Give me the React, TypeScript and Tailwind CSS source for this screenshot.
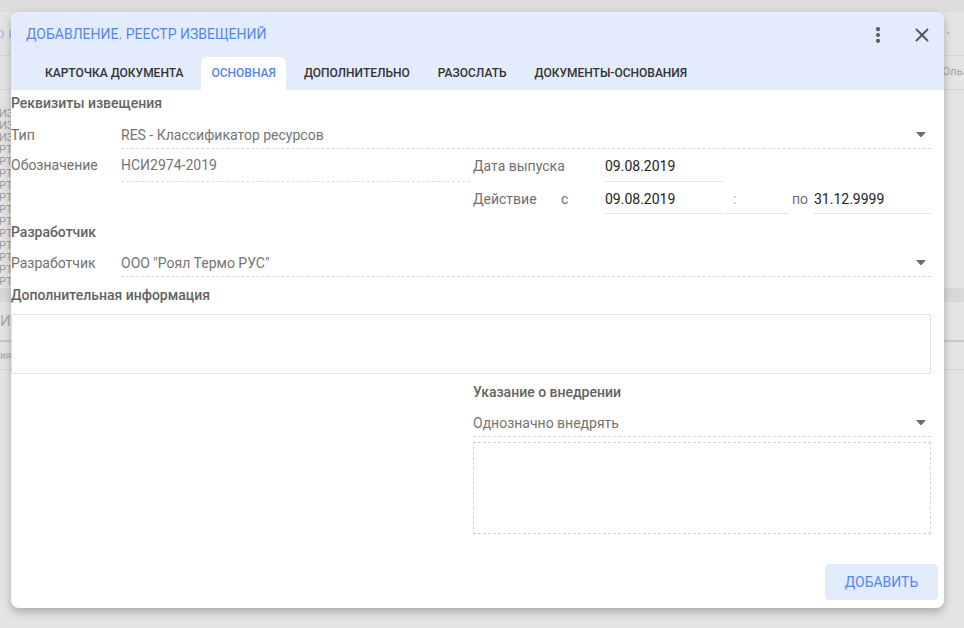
import { EllipsisVertical, X } from "lucide-react";

const tabs = ["КАРТОЧКА ДОКУМЕНТА", "ОСНОВНАЯ", "ДОПОЛНИТЕЛЬНО", "РАЗОСЛАТЬ", "ДОКУМЕНТЫ-ОСНОВАНИЯ"];

const bgRows = ["ИЗ", "ИЗ", "ИЗ", "РТ", "РТ", "РТ", "РТ", "РТ", "РТ", "РТ", "РТ", "РТ", "РТ", "РТ", "РТ"];

function Caret() {
  return (
    <svg width="10" height="6" viewBox="0 0 10 6" className="shrink-0 mr-[5px]">
      <path d="M0 0 L10 0 L5 5.5 Z" fill="#6b6b6b" />
    </svg>
  );
}

function SelectRow({ label, value }: { label: string; value: string }) {
  return (
    <div className="flex items-end h-8">
      <div className="w-[110px] shrink-0 pb-[4px] leading-5 text-[#707070]">{label}</div>
      <div className="flex-1 h-8 flex items-end justify-between pb-[3px] border-b border-dashed border-[#cddff8]">
        <span className="leading-5 text-[#747474]">{value}</span>
        <div className="pb-[7px]">
          <Caret />
        </div>
      </div>
    </div>
  );
}

function DateField({ value, width }: { value: string; width: string }) {
  return (
    <div className={`${width} h-full flex items-end pb-1 border-b border-[#dbe4f2]`}>
      <span className="leading-5 text-[#222]">{value}</span>
    </div>
  );
}

export default function App() {
  return (
    <div
      className="relative w-[964px] h-[628px] overflow-hidden bg-[#e4e4e4] text-[14px]"
      style={{ fontFamily: "Roboto, 'Noto Sans', sans-serif" }}
    >
      {/* faint page behind the dialog */}
      <div className="h-[12px] bg-[#dddddd]" />
      <div className="h-[44px] border-b border-[#d6d6d6] flex items-center justify-between">
        <span className="text-[#b6b0d6] text-[15px] -ml-[4px]">о и</span>
        <span className="text-[#e7a0a0] text-[10px] mr-[14px]">•</span>
      </div>
      <div className="h-[34px] border-b border-[#d6d6d6] flex justify-end items-center">
        <span className="text-[#a0a0a0] text-[11px] -mr-[4px]">Ольз</span>
      </div>
      <div className="flex flex-col pt-[18px] text-[11px] leading-[12px] text-[#9c9c9c]">
        {bgRows.map((r, i) => (
          <span key={i} className="-ml-px">{r}</span>
        ))}
      </div>
      <div className="h-[14px] bg-[#d9d9d9]" />
      <div className="h-[40px] border-b-2 border-[#c8c8c8] flex items-center text-[#aaa] text-[15px]">И</div>
      <div className="h-[28px] border-b border-[#d6d6d6] flex items-center text-[#aaa] text-[10px]">ия</div>

      {/* dialog */}
      <div className="absolute left-[11px] top-[12px] w-[933px] bg-white rounded-[8px] overflow-hidden shadow-[0_4px_10px_rgba(0,0,0,0.25)]">
        <div className="bg-[#e2ecfd]">
          <div className="h-[45px] flex items-center justify-between pl-[15px] pr-[11px]">
            <span className="text-[#5586ec] text-[14px]">ДОБАВЛЕНИЕ. РЕЕСТР ИЗВЕЩЕНИЙ</span>
            <div className="flex items-center gap-[23px] text-[#555]">
              <EllipsisVertical size={20} strokeWidth={3} />
              <X size={22} strokeWidth={2} />
            </div>
          </div>
          <div className="h-[33px] flex items-stretch gap-[8px] pl-[24px]">
            {tabs.map((t) => (
              <div
                key={t}
                className={`px-[10px] flex items-center pb-[1px] rounded-t-[6px] text-[12px] font-medium ${
                  t === "ОСНОВНАЯ" ? "bg-white text-[#5586ec]" : "text-[#333]"
                }`}
              >
                {t}
              </div>
            ))}
          </div>
        </div>

        <div className="pr-[13px]">
          <div className="h-[27px] flex items-center font-medium text-[#636363]">Реквизиты извещения</div>
          <SelectRow label="Тип" value="RES - Классификатор ресурсов" />

          <div className="flex">
            <div className="w-[459px] flex items-start h-[33px]">
              <div className="w-[110px] shrink-0 leading-5 text-[#707070] pt-[6px]">Обозначение</div>
              <div className="flex-1 h-[33px] pt-[6px] border-b border-dashed border-[#cddff8]">
                <span className="leading-5 text-[#747474]">НСИ2974-2019</span>
              </div>
            </div>
            <div className="flex-1 ml-[3px] flex flex-col">
              <div className="h-[33px] flex items-end">
                <div className="w-[132px] shrink-0 pb-[6px] leading-5 text-[#707070]">Дата выпуска</div>
                <div className="w-[118px] h-full flex items-end pb-[5px] border-b border-[#dbe4f2]">
                  <span className="leading-5 text-[#222]">09.08.2019</span>
                </div>
              </div>
              <div className="h-8 flex items-end">
                <div className="w-[88px] shrink-0 pb-[5px] leading-5 text-[#707070]">Действие</div>
                <div className="w-[44px] shrink-0 pb-[5px] leading-5 text-[#707070]">с</div>
                <DateField value="09.08.2019" width="w-[118px]" />
                <div className="ml-[3px] w-[63px] h-full flex items-end pb-1 pl-[7px] border-b border-[#dbe4f2]">
                  <span className="leading-5 text-[#aaa]">:</span>
                </div>
                <div className="w-[25px] pl-[3px] pb-[5px] leading-5 text-[#707070]">по</div>
                <DateField value="31.12.9999" width="flex-1" />
              </div>
            </div>
          </div>

          <div className="h-[31px] flex items-end pb-[3px] font-medium text-[#636363] leading-5">Разработчик</div>
          <SelectRow label="Разработчик" value={'ООО "Роял Термо РУС"'} />

          <div className="h-[37px] flex items-center font-medium text-[#636363]">Дополнительная информация</div>
          <div className="h-[60px] border border-[#d5e3f8]" />

          <div className="flex">
            <div className="w-[462px]" />
            <div className="flex-1">
              <div className="h-[31px] flex items-end pb-[3px] font-medium text-[#636363] leading-5">
                Указание о внедрении
              </div>
              <div className="h-8 flex items-end justify-between pb-[3px] border-b border-dashed border-[#cddff8]">
                <span className="leading-5 text-[#747474]">Однозначно внедрять</span>
                <div className="pb-[7px]">
                  <Caret />
                </div>
              </div>
              <div className="mt-[5px] h-[92px] border border-dashed border-[#d4d4d4]" />
            </div>
          </div>
        </div>

        <div className="flex justify-end pr-[6px] pt-[30px] pb-[8px]">
          <button className="w-[113px] h-[36px] rounded-[4px] bg-[#e1ebfc] text-[#5586ec] text-[14px]">
            ДОБАВИТЬ
          </button>
        </div>
      </div>
    </div>
  );
}
